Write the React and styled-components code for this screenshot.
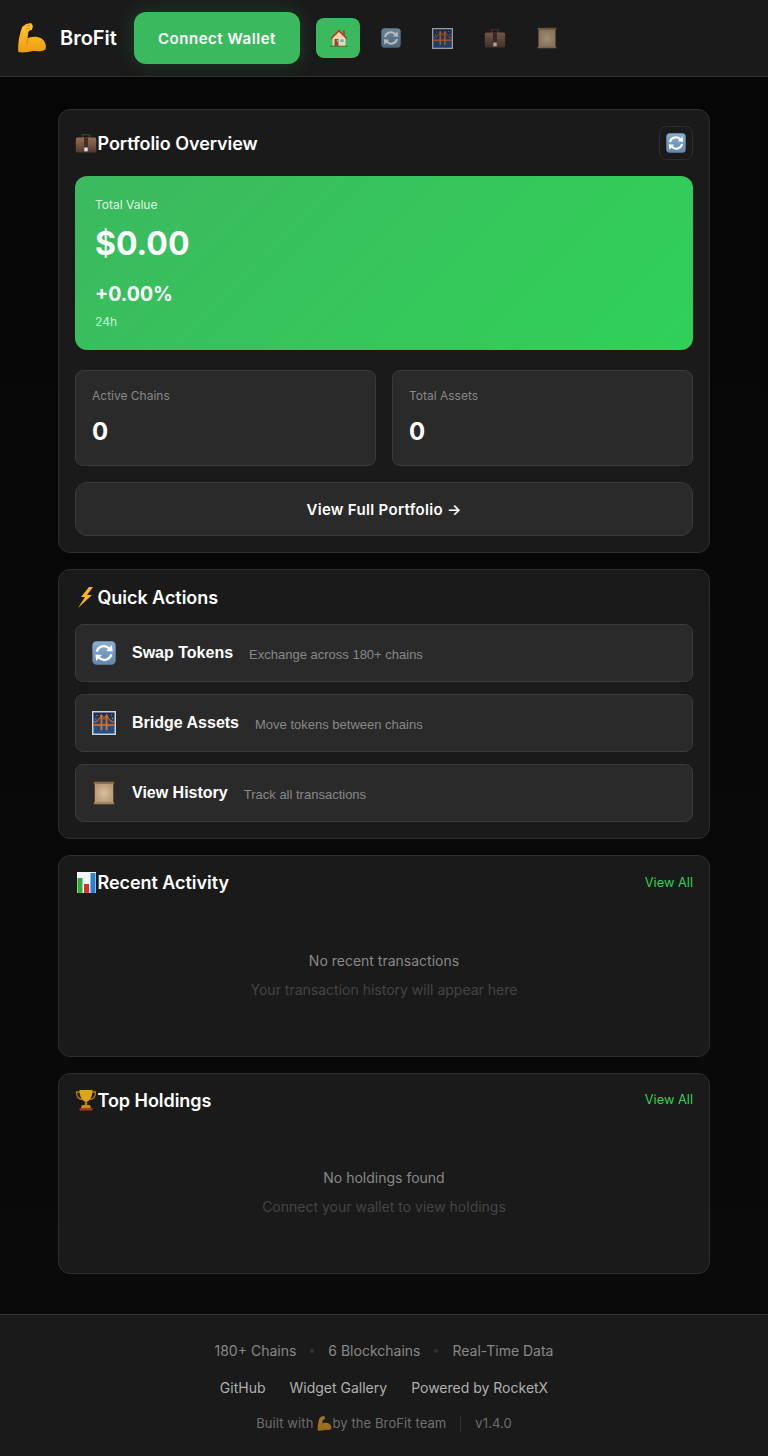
import React from 'react';
import styled, { createGlobalStyle } from 'styled-components';

const GlobalStyle = createGlobalStyle`
  html, body {
    margin: 0;
    padding: 0;
    background: #0a0a0a;
    color: #fff;
    font-family: 'Inter', 'Liberation Sans', sans-serif;
  }
  * { box-sizing: border-box; }
`;

const Page = styled.div`
  min-height: 1456px;
  display: flex;
  flex-direction: column;
  background: linear-gradient(180deg, #060606 0%, #0a0a0a 100%);
`;

const Header = styled.header`
  height: 77px;
  display: flex;
  align-items: center;
  gap: 16px;
  padding: 0 16px 0 17px;
  background: #1a1a1a;
  border-bottom: 1px solid #333;
`;

const Logo = styled.div`
  display: flex;
  align-items: center;
  gap: 13px;
  margin-right: 1px;
  font-size: 20px;
  font-weight: 600;
`;

const ConnectButton = styled.button`
  width: 166px;
  height: 52px;
  border: 0;
  border-radius: 12px;
  background: #3bb95f;
  box-shadow: 0 0 20px rgba(52, 199, 89, 0.22);
  color: #fff;
  font-family: inherit;
  font-size: 15px;
  font-weight: 600;
  letter-spacing: 0.55px;
`;

const Nav = styled.nav`
  display: flex;
  gap: 8px;
`;

const NavItem = styled.div`
  width: 44px;
  height: 40px;
  display: flex;
  align-items: center;
  justify-content: center;
  padding-left: 2px;
  border-radius: 8px;
  background: ${({ $active }) => ($active ? '#3bb95f' : 'transparent')};
  opacity: ${({ $active }) => ($active ? 1 : 0.7)};
`;

const Main = styled.main`
  flex: 1;
  display: flex;
  flex-direction: column;
  gap: 16px;
  padding: 32px 58px 40px;
`;

const Card = styled.section`
  padding: 16px;
  background: #1a1a1a;
  border: 1px solid #2e2e2e;
  border-radius: 12px;
`;

const CardHead = styled.div`
  display: flex;
  align-items: center;
  justify-content: space-between;
  margin-bottom: 16px;
  min-height: ${({ $compact }) => ($compact ? '21.5px' : '22px')};
`;

const CardTitle = styled.h2`
  display: flex;
  align-items: center;
  height: 21px;
  margin: 0;
  font-size: 18px;
  line-height: 21px;
  font-weight: 600;
  letter-spacing: -0.05px;
`;

const TitleIcon = styled.span`
  display: flex;
  justify-content: center;
  width: 22.5px;
`;

const RefreshButton = styled.button`
  width: 34px;
  height: 34px;
  display: flex;
  align-items: center;
  justify-content: center;
  padding: 0;
  background: transparent;
  border: 1px solid #2e2e2e;
  border-radius: 8px;
`;

const ViewAll = styled.a`
  color: #30d158;
  font-size: 12.8px;
  line-height: 16px;
`;

const Hero = styled.div`
  height: 174px;
  padding: 20px;
  border-radius: 12px;
  background: linear-gradient(135deg, #3cb95f 0%, #30d158 100%);
`;

const HeroLabel = styled.div`
  font-size: 12px;
  line-height: 18px;
  color: rgba(255, 255, 255, 0.85);
`;

const HeroValue = styled.div`
  margin-top: 8px;
  font-size: 32px;
  line-height: 44px;
  font-weight: 700;
`;

const HeroChange = styled.div`
  margin-top: 16px;
  font-size: 19.5px;
  line-height: 24px;
  font-weight: 700;
`;

const HeroPeriod = styled.div`
  margin-top: 8px;
  font-size: 12px;
  line-height: 16px;
  color: rgba(255, 255, 255, 0.75);
`;

const Stats = styled.div`
  display: grid;
  grid-template-columns: 1fr 1fr;
  gap: 16px;
  margin: 20px 0 16px;
`;

const Stat = styled.div`
  height: 96px;
  padding: 16px;
  background: #2a2a2a;
  border: 1px solid #3a3a3a;
  border-radius: 8px;
`;

const StatLabel = styled.div`
  font-size: 12px;
  line-height: 18px;
  color: #888;
`;

const StatValue = styled.div`
  margin-top: 9px;
  font-size: 24px;
  line-height: 36px;
  font-weight: 700;
`;

const WideButton = styled.button`
  display: block;
  width: 100%;
  height: 54px;
  background: #2a2a2a;
  border: 1px solid #3a3a3a;
  border-radius: 12px;
  color: #fff;
  font-family: inherit;
  font-size: 15px;
  font-weight: 600;
  letter-spacing: 0.32px;
`;

const ActionList = styled.div`
  display: flex;
  flex-direction: column;
  gap: 12px;
`;

const ActionRow = styled.button`
  height: 58px;
  display: flex;
  align-items: center;
  padding: 0 16px;
  background: #2a2a2a;
  border: 1px solid #3a3a3a;
  border-radius: 8px;
  color: #fff;
  font-family: 'Liberation Sans', sans-serif;
`;

const ActionIcon = styled.span`
  display: flex;
  width: 24px;
  margin-right: 16px;
`;

const ActionName = styled.span`
  font-size: 16px;
  font-weight: 700;
  margin-top: -1px;
`;

const ActionHint = styled.span`
  margin: 2px 0 0 16px;
  font-size: 13px;
  color: #888;
`;

const Empty = styled.div`
  padding: 40px 0;
  text-align: center;
  font-size: 14px;
  line-height: 21px;
  color: #888;
`;

const EmptyHint = styled.div`
  margin-top: 8px;
  color: #444;
`;

const Footer = styled.footer`
  height: 142px;
  display: flex;
  flex-direction: column;
  align-items: center;
  gap: 16px;
  padding-top: 25px;
  background: #1a1a1a;
  border-top: 1px solid #333;
  font-size: 14px;
  line-height: 21px;
`;

const FooterRow = styled.div`
  display: flex;
  align-items: center;
  gap: ${({ $gap }) => $gap}px;
  color: ${({ $color }) => $color};
`;

const FooterMeta = styled(FooterRow)`
  margin-top: -1px;
  font-size: 13px;
  letter-spacing: 0.1px;
`;

const Dot = styled.span`
  width: 4px;
  height: 4px;
  border-radius: 50%;
  background: #333;
`;

const Built = styled.span`
  display: flex;
  align-items: center;
`;

const BuiltIcon = styled.span`
  display: flex;
  margin-left: 4px;
  opacity: 0.6;
`;

const Divider = styled.span`
  width: 1px;
  height: 16px;
  background: #333;
`;

/* emoji drawings */
const Muscle = ({ size = 30 }) => (
  <svg width={size} height={size} viewBox="0 0 30 31">
    <defs>
      <linearGradient id="arm" x1="0" y1="0" x2="0" y2="1">
        <stop offset="0" stopColor="#fdc731" />
        <stop offset="1" stopColor="#ee9c12" />
      </linearGradient>
    </defs>
    <path
      d="M5 4 L9 1 L14 0 L16 3 L15 7 L12 8 L11 10 L10.500 16 C13 14 20 13 25 16 C29 19 30 24 29 27 C26 30 20 29 16 29 C11 30 5 31 1 30 C0 22 2 12 5 4 Z"
      fill="url(#arm)"
    />
    <path d="M9 3 L13 2.500 M9 6 L12.500 5.500 M10.500 16 C9.500 18 9.500 20 10.500 22" stroke="#c77f0e" strokeWidth="0.8" fill="none" />
  </svg>
);

const House = ({ size = 20 }) => (
  <svg width={size} height={size} viewBox="0 0 20 20">
    <rect x="14" y="2" width="2" height="5" fill="#8c5a3a" />
    <path d="M3.500 9 L10 3 L16.500 9 V18 H3.500 Z" fill="#f0d6a4" />
    <path d="M1.500 10 L10 1.500 L18.500 10 L17.300 11 L10 4 L2.700 11 Z" fill="#b53a2f" />
    <rect x="5.500" y="11" width="4" height="7" fill="#8d4d2e" />
    <rect x="7.800" y="12" width="1.200" height="1.800" fill="#7fb3d6" />
    <rect x="11" y="11" width="4" height="3.500" fill="#6fa8d0" stroke="#fff4dc" strokeWidth="0.500" />
    <rect x="1" y="17.700" width="18" height="1" fill="#55683a" />
  </svg>
);

const Refresh = ({ size = 20 }) => (
  <svg width={size} height={size} viewBox="0 0 20 20">
    <defs>
      <linearGradient id="swapBg" x1="0" y1="0" x2="0" y2="1">
        <stop offset="0" stopColor="#88add0" />
        <stop offset="1" stopColor="#6488ab" />
      </linearGradient>
    </defs>
    <rect x="0.300" y="0.300" width="19.400" height="19.400" rx="3.500" fill="url(#swapBg)" />
    <path d="M4 9 A6 6 0 0 1 14.300 6.300" stroke="#fff" strokeWidth="2" fill="none" />
    <path d="M11.800 8.300 L17.200 8.700 L16.500 3.300 Z" fill="#fff" />
    <path d="M16 11 A6 6 0 0 1 5.700 13.700" stroke="#fff" strokeWidth="2" fill="none" />
    <path d="M8.200 11.700 L2.800 11.300 L3.500 16.700 Z" fill="#fff" />
  </svg>
);

const Bridge = ({ size = 21 }) => (
  <svg width={size} height={size} viewBox="0 0 21 21">
    <defs>
      <linearGradient id="nightSky" x1="0" y1="0" x2="0" y2="1">
        <stop offset="0" stopColor="#1c2a4a" />
        <stop offset="0.650" stopColor="#2a4f80" />
        <stop offset="1" stopColor="#1e4f8c" />
      </linearGradient>
    </defs>
    <rect width="21" height="21" fill="#cfd3d7" />
    <rect x="1.300" y="1.300" width="18.400" height="18.400" fill="url(#nightSky)" />
    <path d="M4 4 h.8 M16.500 3.500 h.8 M3 7 h.8 M17.500 6.500 h.8" stroke="#e9e3b8" strokeWidth="0.700" />
    <path d="M1.300 10 C4 9.500 6.500 7.500 8 3.500 C8.700 6 12.300 6 13 3.500 C14.500 7.500 17 9.500 19.700 10" stroke="#c9622a" strokeWidth="0.900" fill="none" />
    <path d="M1.300 11.500 H19.700 V13 H1.300 Z" fill="#d9661f" />
    <rect x="7.500" y="3.300" width="1.500" height="13.700" fill="#e2721f" />
    <rect x="12" y="3.300" width="1.500" height="13.700" fill="#e2721f" />
    <rect x="7.500" y="6.500" width="6" height="0.900" fill="#c9622a" />
  </svg>
);

const Briefcase = ({ size = 22 }) => (
  <svg width={size} height={size} viewBox="0 0 22 22">
    <defs>
      <linearGradient id="case" x1="0" y1="0" x2="0" y2="1">
        <stop offset="0" stopColor="#94705b" />
        <stop offset="1" stopColor="#553a2c" />
      </linearGradient>
    </defs>
    <path d="M7.500 6 V2.700 H14.500 V6" stroke="#4a3327" strokeWidth="1.500" fill="none" />
    <rect x="0.800" y="5.500" width="20.400" height="15" rx="1.500" fill="url(#case)" />
    <rect x="9" y="5.500" width="4" height="11" fill="#4a2f23" />
    <rect x="9.300" y="15.500" width="3.400" height="3.800" fill="#e5e1dc" />
  </svg>
);

const Scroll = ({ size = 22 }) => (
  <svg width={size} height={size} viewBox="0 0 22 22">
    <defs>
      <radialGradient id="paper">
        <stop offset="0" stopColor="#d8bf9f" />
        <stop offset="1" stopColor="#b89a76" />
      </radialGradient>
    </defs>
    <rect x="2.500" y="2" width="17" height="18" fill="url(#paper)" />
    <rect x="1.500" y="0.800" width="19" height="2" rx="1" fill="#8b6e50" />
    <rect x="1.500" y="19.500" width="19" height="1.800" rx="0.900" fill="#a0835f" />
  </svg>
);

const Bolt = () => (
  <svg width="16" height="21" viewBox="0 0 16 21">
    <path d="M11 0 L3 10 L7 10 L0 21 L14 8 L9 8 L15 0 Z" fill="#f7b32b" />
  </svg>
);

const BarChart = () => (
  <svg width="19" height="21" viewBox="0 0 19 21">
    <rect width="19" height="21" fill="#f4f6f8" />
    <rect x="0.500" y="6" width="5" height="15" fill="#2fae3f" />
    <rect x="7" y="12" width="5" height="9" fill="#d9302a" />
    <rect x="13.500" y="1" width="5" height="20" fill="#2c7fd6" />
  </svg>
);

const Trophy = () => (
  <svg width="22" height="22" viewBox="0 0 22 22">
    <path d="M5 3 H1.500 C1.500 8 4 10 7 10.500 M17 3 H20.500 C20.500 8 18 10 15 10.500" stroke="#b87d12" strokeWidth="1.300" fill="none" />
    <path d="M4.500 1 H17.500 C17.500 8 15 12 11 13 C7 12 4.500 8 4.500 1 Z" fill="#e0a31f" />
    <rect x="9.800" y="12" width="2.400" height="4" fill="#b87d12" />
    <path d="M7 16 H15 L16 19 H6 Z" fill="#c98a18" />
    <rect x="4.500" y="19" width="13" height="2.500" fill="#a5391b" />
  </svg>
);

const navItems = [
  { key: 'home', icon: <House />, active: true },
  { key: 'swap', icon: <Refresh /> },
  { key: 'bridge', icon: <Bridge /> },
  { key: 'portfolio', icon: <Briefcase /> },
  { key: 'history', icon: <Scroll /> },
];

const actions = [
  { name: 'Swap Tokens', hint: 'Exchange across 180+ chains', icon: <Refresh size={24} /> },
  { name: 'Bridge Assets', hint: 'Move tokens between chains', icon: <Bridge size={24} /> },
  { name: 'View History', hint: 'Track all transactions', icon: <Scroll size={24} /> },
];

const EmptyCard = ({ icon, title, message, hint }) => (
  <Card>
    <CardHead $compact>
      <CardTitle>
        <TitleIcon>{icon}</TitleIcon>
        {title}
      </CardTitle>
      <ViewAll>View All</ViewAll>
    </CardHead>
    <Empty>
      {message}
      <EmptyHint>{hint}</EmptyHint>
    </Empty>
  </Card>
);

const App = () => (
  <Page>
    <GlobalStyle />
    <Header>
      <Logo>
        <Muscle />
        BroFit
      </Logo>
      <ConnectButton>Connect Wallet</ConnectButton>
      <Nav>
        {navItems.map((n) => (
          <NavItem key={n.key} $active={n.active}>
            {n.icon}
          </NavItem>
        ))}
      </Nav>
    </Header>

    <Main>
      <Card>
        <CardHead>
          <CardTitle>
            <TitleIcon>
              <Briefcase />
            </TitleIcon>
            Portfolio Overview
          </CardTitle>
          <RefreshButton>
            <Refresh />
          </RefreshButton>
        </CardHead>
        <Hero>
          <HeroLabel>Total Value</HeroLabel>
          <HeroValue>$0.00</HeroValue>
          <HeroChange>+0.00%</HeroChange>
          <HeroPeriod>24h</HeroPeriod>
        </Hero>
        <Stats>
          <Stat>
            <StatLabel>Active Chains</StatLabel>
            <StatValue>0</StatValue>
          </Stat>
          <Stat>
            <StatLabel>Total Assets</StatLabel>
            <StatValue>0</StatValue>
          </Stat>
        </Stats>
        <WideButton>View Full Portfolio →</WideButton>
      </Card>

      <Card>
        <CardHead>
          <CardTitle>
            <TitleIcon>
              <Bolt />
            </TitleIcon>
            Quick Actions
          </CardTitle>
        </CardHead>
        <ActionList>
          {actions.map((a) => (
            <ActionRow key={a.name}>
              <ActionIcon>{a.icon}</ActionIcon>
              <ActionName>{a.name}</ActionName>
              <ActionHint>{a.hint}</ActionHint>
            </ActionRow>
          ))}
        </ActionList>
      </Card>

      <EmptyCard
        icon={<BarChart />}
        title="Recent Activity"
        message="No recent transactions"
        hint="Your transaction history will appear here"
      />
      <EmptyCard
        icon={<Trophy />}
        title="Top Holdings"
        message="No holdings found"
        hint="Connect your wallet to view holdings"
      />
    </Main>

    <Footer>
      <FooterRow $gap={14} $color="#888">
        <span>180+ Chains</span>
        <Dot />
        <span>6 Blockchains</span>
        <Dot />
        <span>Real-Time Data</span>
      </FooterRow>
      <FooterRow $gap={24} $color="#b0b0b0">
        <span>GitHub</span>
        <span>Widget Gallery</span>
        <span>Powered by RocketX</span>
      </FooterRow>
      <FooterMeta $gap={14} $color="#6e6e6e">
        <Built>
          Built with
          <BuiltIcon>
            <Muscle size={15} />
          </BuiltIcon>
          by the BroFit team
        </Built>
        <Divider />
        <span>v1.4.0</span>
      </FooterMeta>
    </Footer>
  </Page>
);

export default App;
